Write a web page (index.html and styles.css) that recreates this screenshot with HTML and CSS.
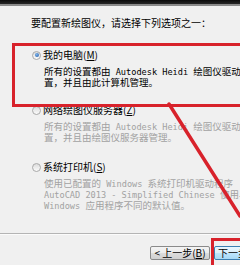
FILE: index.html
```html
<!DOCTYPE html>
<html lang="zh-CN">
<head>
<meta charset="utf-8">
<title>添加绘图仪</title>
<link rel="stylesheet" href="styles.css">
</head>
<body>
<div class="titlebar"></div>
<div class="content">
  <p class="heading">要配置新绘图仪，请选择下列选项之一：</p>

  <div class="option opt1">
    <div class="opt-title"><span class="radio checked"></span><span>我的电脑(<u>M</u>)</span></div>
    <div class="desc">
      <div class="line">所有的设置都由<span class="lat"> Autodesk Heidi </span>绘图仪驱动程序设</div>
      <div class="line">置，并且由此计算机管理。</div>
    </div>
  </div>

  <div class="option opt2">
    <div class="opt-title"><span class="radio"></span><span>网络绘图仪服务器(<u>Z</u>)</span></div>
    <div class="desc disabled">
      <div class="line">所有的设置都由<span class="lat"> Autodesk Heidi </span>绘图仪驱动程序设</div>
      <div class="line">置，并且由绘图仪服务器管理。</div>
    </div>
  </div>

  <div class="option opt3">
    <div class="opt-title"><span class="radio"></span><span>系统打印机(<u>S</u>)</span></div>
    <div class="desc disabled">
      <div class="line">使用已配置的<span class="lat"> Windows </span>系统打印机驱动程序</div>
      <div class="line"><span class="lat">AutoCAD 2013 - Simplified Chinese </span>使用与</div>
      <div class="line"><span class="lat">Windows </span>应用程序不同的默认值。</div>
    </div>
  </div>
</div>

<div class="separator"></div>

<div class="buttons">
  <button class="btn">&lt; 上一步(<u>B</u>)</button>
  <button class="btn default">下一步(<u>N</u>) &gt;</button>
</div>

<div class="mark mark-option"></div>
<div class="mark mark-next"></div>
<svg class="arrow" width="240" height="265" viewBox="0 0 240 265">
  <line x1="169" y1="104" x2="240" y2="216" stroke="#d8222b" stroke-width="3.5" stroke-linecap="round"/>
</svg>
</body>
</html>
```

FILE: styles.css
```css
html, body {
  margin: 0;
  padding: 0;
}

body {
  width: 240px;
  height: 265px;
  overflow: hidden;
  position: relative;
  background: #f0f0f0;
  font-family: "Noto Sans CJK SC", "Noto Sans", sans-serif;
  font-size: 10px;
  color: #000;
}

.titlebar {
  height: 4px;
  background: linear-gradient(#0a0a0a, #262626);
  border-bottom: 2px solid #8a8a8a;
}

.content {
  white-space: nowrap;
  overflow: hidden;
}

.heading {
  margin: 11px 0 0 31px;
  line-height: 12px;
  font-size: 10px;
}

.option {
  padding-left: 32px;
}

.opt1 { margin-top: 20px; }
.opt2 { margin-top: 16px; }
.opt3 { margin-top: 18px; }

.opt-title {
  display: flex;
  align-items: center;
  gap: 2px;
  height: 12px;
  line-height: 12px;
  font-size: 10px;
}

.radio {
  width: 7px;
  height: 7px;
  border: 1px solid #a9a9a9;
  border-radius: 50%;
  background: linear-gradient(#dcdcdc, #fbfbfb);
  display: flex;
  align-items: center;
  justify-content: center;
  flex: none;
}

.radio.checked::after {
  content: "";
  width: 4px;
  height: 4px;
  border-radius: 50%;
  background: radial-gradient(circle at 40% 35%, #7fb4ea, #1f5aa8);
}

.desc {
  margin-top: 5px;
  padding-left: 12px;
  font-size: 9.5px;
}

.line {
  height: 11px;
  line-height: 11px;
  overflow: visible;
}

.desc.disabled {
  color: #a2a2a2;
}

.lat {
  font-family: "DejaVu Sans Mono", "Liberation Mono", monospace;
  font-size: 8.6px;
  line-height: 11px;
}

.separator {
  position: absolute;
  left: 0;
  right: 0;
  top: 233px;
  height: 1px;
  background: #b4b4b4;
  border-bottom: 1px solid #fbfbfb;
}

.buttons {
  position: absolute;
  left: 150px;
  right: 0;
  top: 246px;
  display: flex;
  gap: 4px;
  white-space: nowrap;
  overflow: hidden;
}

.btn {
  width: 60px;
  height: 14px;
  flex: none;
  padding: 0;
  margin: 0;
  border: 1px solid #8a8a8a;
  border-radius: 2px;
  background: linear-gradient(#f4f4f4 0%, #ebebeb 50%, #dcdcdc 51%, #d0d0d0 100%);
  font-family: "Noto Sans CJK SC", sans-serif;
  font-size: 10px;
  line-height: 12px;
  color: #000;
}

.btn.default {
  border-color: #3c7fb1;
  background: linear-gradient(#eaf6fd 0%, #d9f0fc 50%, #bee6fd 51%, #a7d9f5 100%);
}

.mark {
  position: absolute;
  border: 3px solid #d8222b;
}

.mark-option {
  left: 12px;
  right: 0;
  top: 43px;
  height: 58px;
  border-right: none;
}

.mark-next {
  left: 211px;
  right: 0;
  top: 238px;
  bottom: 0;
  border-right: none;
  border-bottom: none;
}

.arrow {
  position: absolute;
  left: 0;
  top: 0;
}
```
